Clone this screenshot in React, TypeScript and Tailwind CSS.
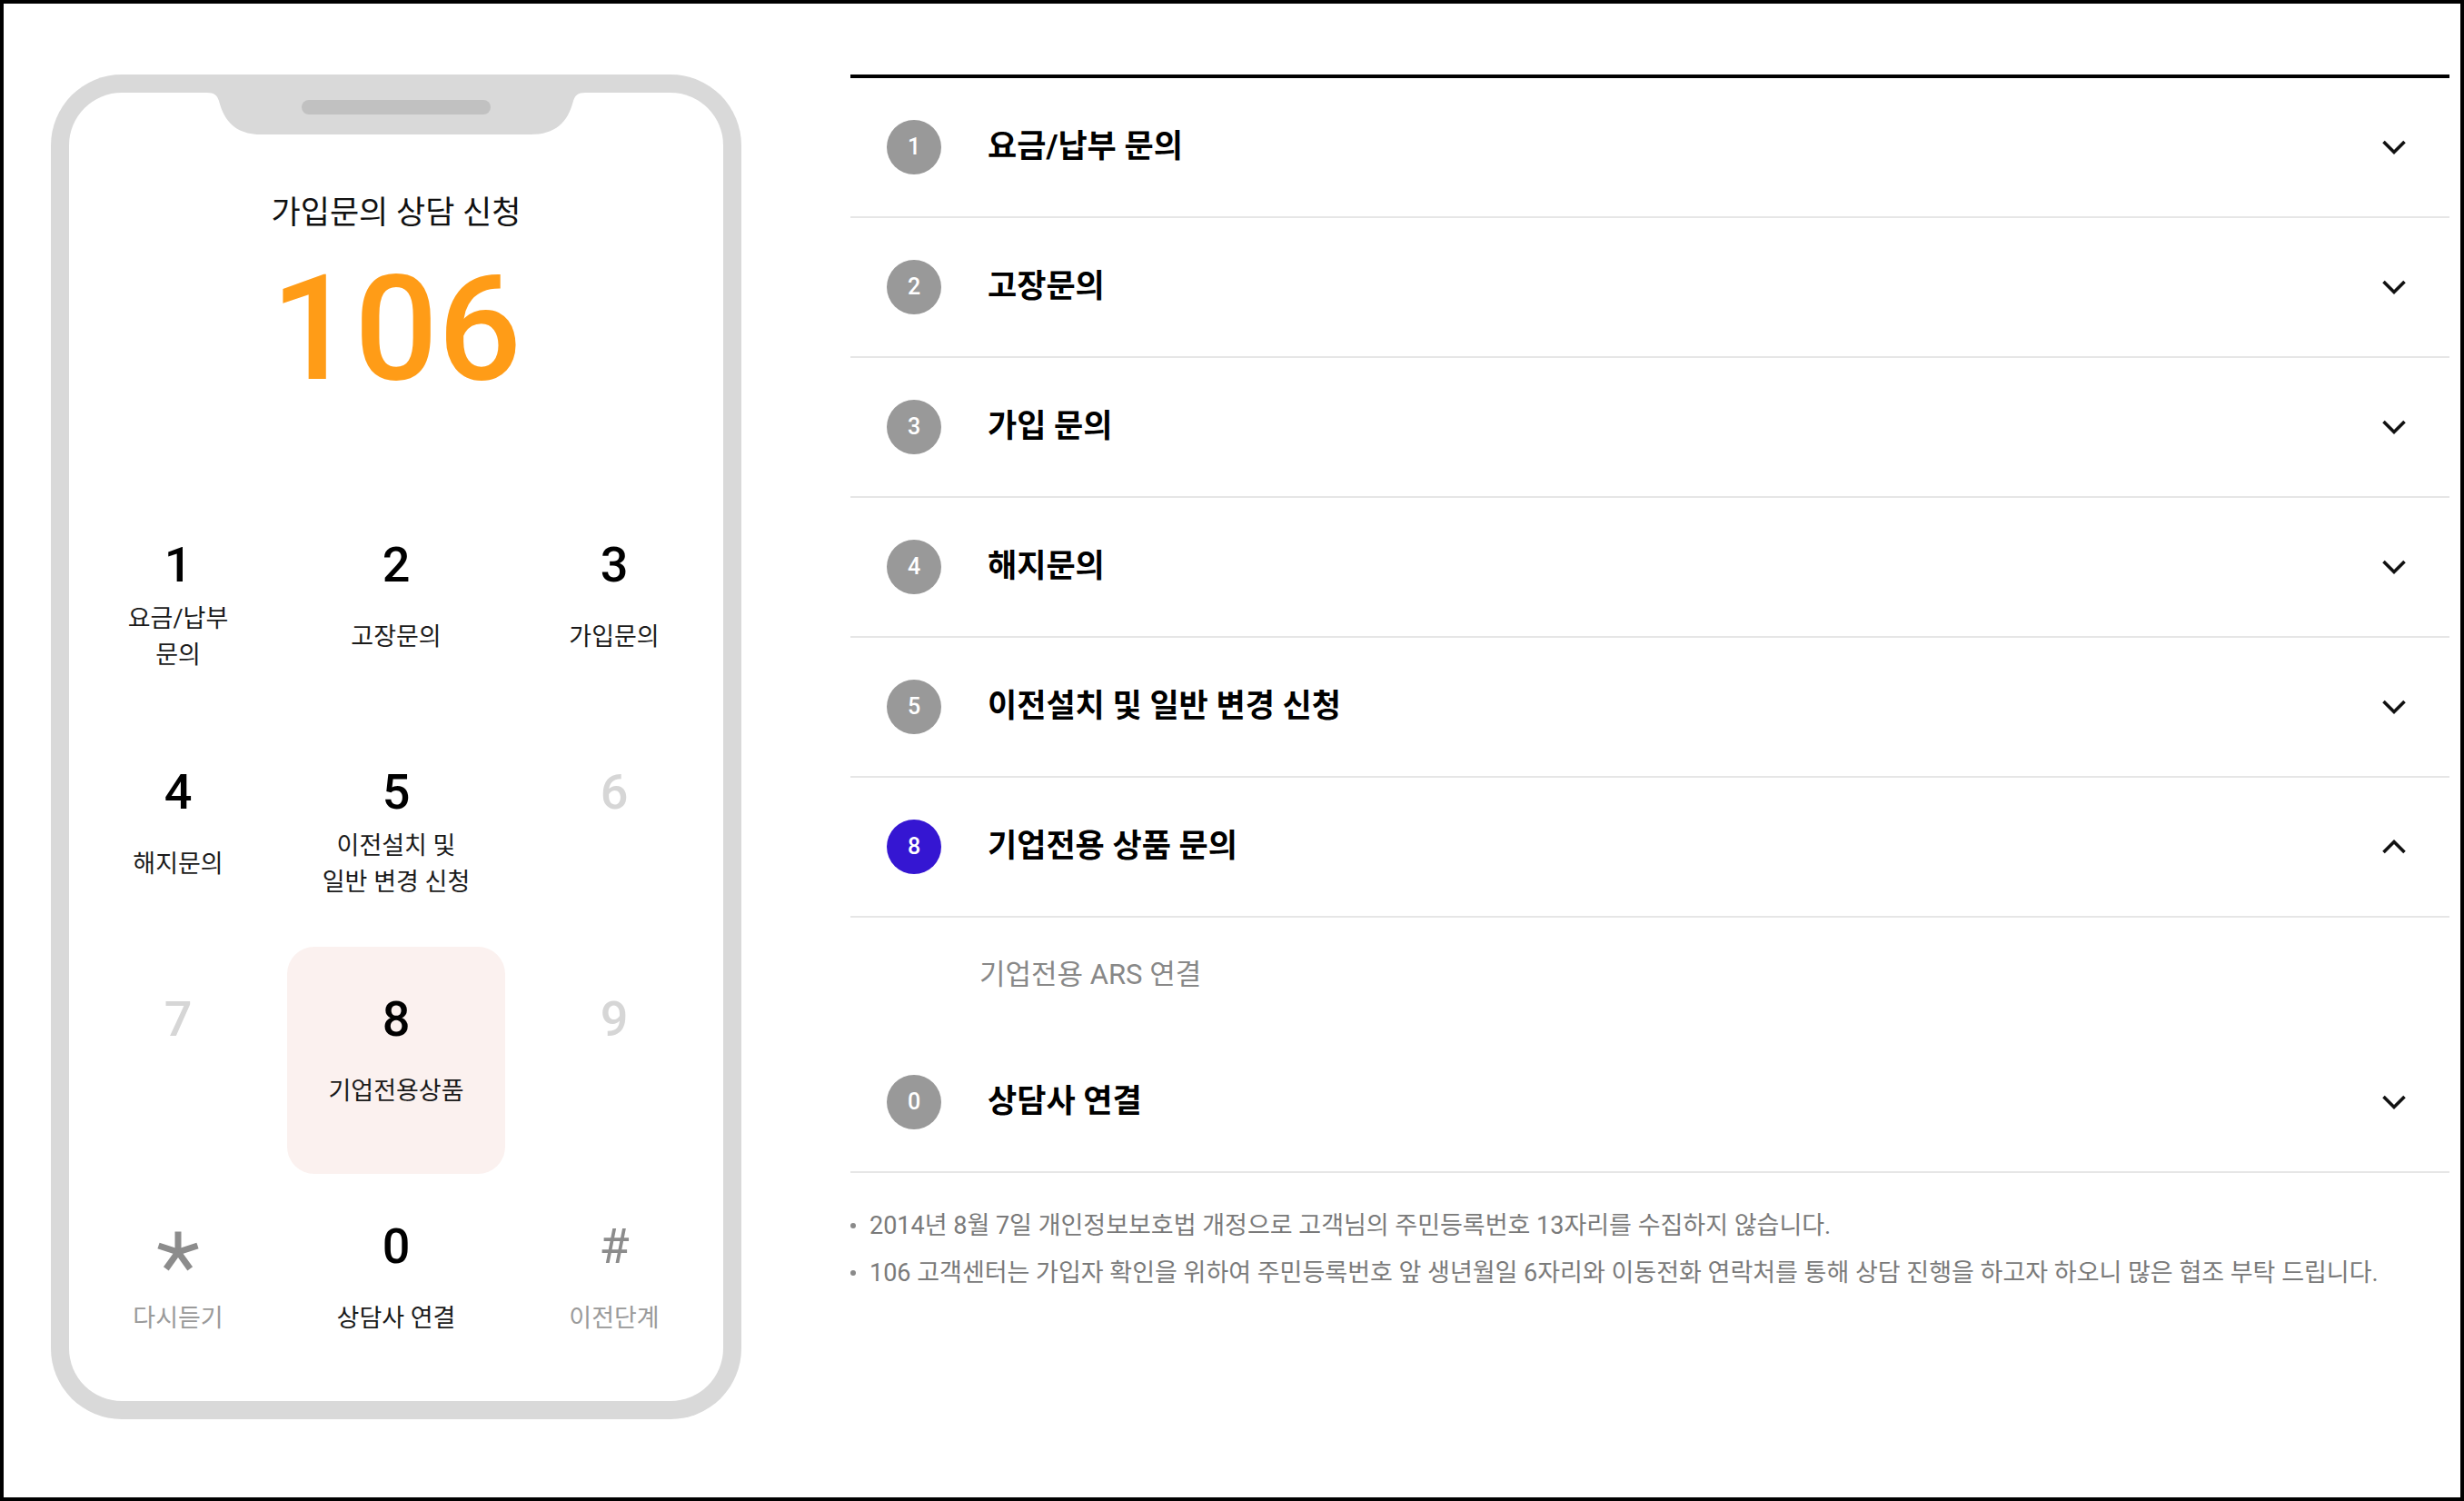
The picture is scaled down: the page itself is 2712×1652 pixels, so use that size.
import { useState } from "react";
import type { ReactNode } from "react";
import clsx from "clsx";

type Key = {
  d: string;
  label?: ReactNode;
  tone: "on" | "off" | "sub";
  active?: boolean;
};

const keys: Key[] = [
  { d: "1", label: <>요금/납부<br />문의</>, tone: "on" },
  { d: "2", label: "고장문의", tone: "on" },
  { d: "3", label: "가입문의", tone: "on" },
  { d: "4", label: "해지문의", tone: "on" },
  { d: "5", label: <>이전설치 및<br />일반 변경 신청</>, tone: "on" },
  { d: "6", tone: "off" },
  { d: "7", tone: "off" },
  { d: "8", label: "기업전용상품", tone: "on", active: true },
  { d: "9", tone: "off" },
  { d: "*", label: "다시듣기", tone: "sub" },
  { d: "0", label: "상담사 연결", tone: "on" },
  { d: "#", label: "이전단계", tone: "sub" },
];

const menus = [
  { n: "1", title: "요금/납부 문의" },
  { n: "2", title: "고장문의" },
  { n: "3", title: "가입 문의" },
  { n: "4", title: "해지문의" },
  { n: "5", title: "이전설치 및 일반 변경 신청" },
  { n: "8", title: "기업전용 상품 문의", sub: "기업전용 ARS 연결" },
  { n: "0", title: "상담사 연결" },
];

function Star() {
  return (
    <svg width="46" height="44" viewBox="0 0 46 44" className="mt-[10px]">
      <g stroke="#8c8c8c" strokeWidth="7" fill="none">
        <line x1="23" y1="23" x2="23" y2="0.5" />
        <line x1="23" y1="23" x2="44.5" y2="16" />
        <line x1="23" y1="23" x2="1.5" y2="16" />
        <line x1="23" y1="23" x2="36.2" y2="41.4" />
        <line x1="23" y1="23" x2="9.8" y2="41.4" />
      </g>
    </svg>
  );
}

function Notch() {
  return (
    <svg width="416" height="46" viewBox="0 0 416 46" className="shrink-0">
      <path
        d="M0 0H416C408 0 405 3 403 9C397 33 383 46 356 46H60C33 46 19 33 13 9C11 3 8 0 0 0Z"
        fill="#d9d9d9"
      />
      <rect x="104" y="8" width="208" height="16" rx="8" fill="#c1c1c1" />
    </svg>
  );
}

function Chevron({ up }: { up?: boolean }) {
  return (
    <svg width="28" height="18" viewBox="0 0 28 18" className={clsx(up && "rotate-180")}>
      <path d="M2.5 3L14 14.5L25.5 3" stroke="#111" strokeWidth="3.6" fill="none" />
    </svg>
  );
}

function KeyCell({ k }: { k: Key }) {
  return (
    <div
      className={clsx(
        "flex h-[250px] flex-col items-center pt-[53px]",
        k.active && "rounded-[30px] bg-[#fbf1ef]"
      )}
    >
      <div
        className={clsx(
          "flex h-[54px] items-start justify-center text-[54px] leading-[54px]",
          k.tone === "on" && "font-medium text-black",
          k.tone === "off" && "font-medium text-[#d6d6d6]",
          k.tone === "sub" && "font-normal text-[#8c8c8c]"
        )}
      >
        {k.d === "*" ? <Star /> : k.d}
      </div>
      <div
        className={clsx(
          "flex h-[104px] items-center text-center text-[27px] leading-[40px]",
          k.tone === "sub" ? "text-[#9a9a9a]" : "text-[#1a1a1a]"
        )}
      >
        {k.label}
      </div>
    </div>
  );
}

function Phone() {
  return (
    <div className="h-[1480px] w-[760px] shrink-0 rounded-[78px] bg-[#d9d9d9] p-[20px]">
      <div className="flex h-full flex-col items-center rounded-[58px] bg-white">
        <Notch />
        <p className="mt-[63px] text-[35px] leading-[48px] text-[#111]">가입문의 상담 신청</p>
        <p className="mt-[22px] text-[162px] font-medium leading-[162px] text-[#ff9c17]">106</p>
        <div className="mt-[99px] grid w-full grid-cols-3">
          {keys.map((k) => (
            <KeyCell key={k.d} k={k} />
          ))}
        </div>
      </div>
    </div>
  );
}

export default function App() {
  const [open, setOpen] = useState<string | null>("8");

  return (
    <div className="flex h-[1652px] w-[2712px] items-start gap-[120px] overflow-hidden border-4 border-black bg-white pl-[52px] pr-[12px] pt-[78px] font-['Roboto','Noto_Sans_CJK_KR',sans-serif]">
      <Phone />

      <div className="flex-1">
        <ul className="border-t-4 border-black">
          {menus.map((m) => {
            const isOpen = open === m.n && !!m.sub;
            return (
              <li key={m.n}>
                <button
                  type="button"
                  onClick={() => setOpen(isOpen ? null : m.n)}
                  className="flex h-[154px] w-full items-center border-b-2 border-[#e6e6e6] pl-[40px] pr-[47px] text-left"
                >
                  <span
                    className={clsx(
                      "flex h-[60px] w-[60px] shrink-0 items-center justify-center rounded-full text-[25px] font-medium text-white",
                      isOpen ? "bg-[#3516d2]" : "bg-[#999999]"
                    )}
                  >
                    {m.n}
                  </span>
                  <span className="ml-[51px] flex-1 text-[35px] font-bold leading-[48px] text-black">
                    {m.title}
                  </span>
                  <Chevron up={isOpen} />
                </button>
                {isOpen && (
                  <div className="flex h-[127px] items-center pl-[142px] text-[31px] text-[#888888]">
                    {m.sub}
                  </div>
                )}
              </li>
            );
          })}
        </ul>

        <ul className="mt-[32px] text-[27px] leading-[52px] text-[#7a7a7a]">
          <li className="flex items-center gap-[15px]">
            <span className="h-[6px] w-[6px] shrink-0 rounded-full bg-[#8a8a8a]" />
            2014년 8월 7일 개인정보보호법 개정으로 고객님의 주민등록번호 13자리를 수집하지 않습니다.
          </li>
          <li className="flex items-center gap-[15px]">
            <span className="h-[6px] w-[6px] shrink-0 rounded-full bg-[#8a8a8a]" />
            106 고객센터는 가입자 확인을 위하여 주민등록번호 앞 생년월일 6자리와 이동전화 연락처를 통해 상담 진행을 하고자 하오니 많은 협조 부탁 드립니다.
          </li>
        </ul>
      </div>
    </div>
  );
}
